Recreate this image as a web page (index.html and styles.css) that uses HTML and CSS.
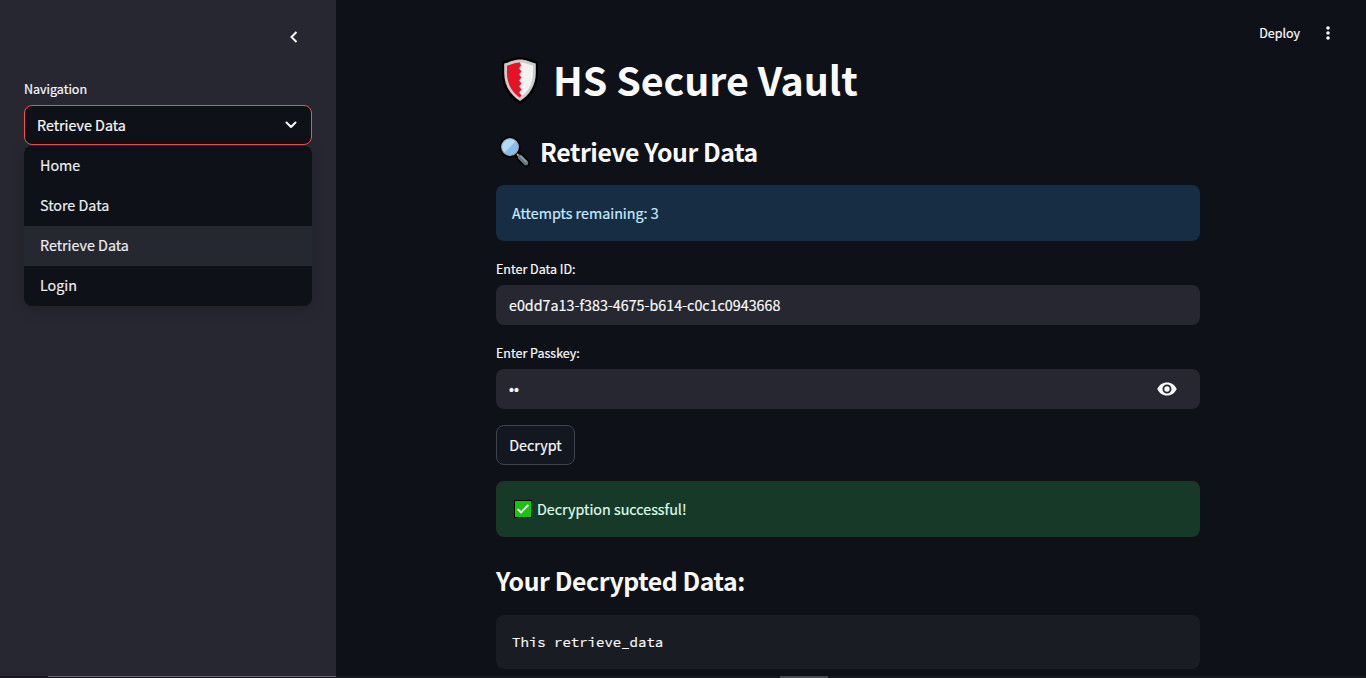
FILE: index.html
```html
<!DOCTYPE html>
<html lang="en">
<head>
<meta charset="utf-8">
<title>HS Secure Vault</title>
<link rel="stylesheet" href="styles.css">
</head>
<body>
<div class="app">
  <aside class="sidebar">
    <div class="sidebar-head">
      <svg class="collapse" width="10" height="14" viewBox="0 0 10 14"><path d="M7.5 2 2.500 7l5 5" fill="none" stroke="#fafafa" stroke-width="2"/></svg>
    </div>
    <div class="label"><span>Navigation</span></div>
    <div class="select">
      <span>Retrieve Data</span>
      <svg width="12" height="8" viewBox="0 0 12 8"><path d="M1.500 1.500 6 6l4.500-4.500" fill="none" stroke="#fafafa" stroke-width="2" stroke-linecap="round" stroke-linejoin="round"/></svg>
    </div>
    <ul class="menu">
      <li><span>Home</span></li>
      <li><span>Store Data</span></li>
      <li class="active"><span>Retrieve Data</span></li>
      <li><span>Login</span></li>
    </ul>
  </aside>
  <main class="main">
    <header class="toolbar">
      <span class="deploy">Deploy</span>
      <svg width="4" height="14" viewBox="0 0 4 14" fill="#fafafa"><circle cx="2" cy="2" r="1.800"/><circle cx="2" cy="7" r="1.800"/><circle cx="2" cy="12" r="1.800"/></svg>
    </header>
    <div class="content">
      <h1>
        <svg class="shield" width="38" height="48" viewBox="0 0 38 48">
          <path d="M19 0C25 0 30 3 37 4.500V16C37 31 29 42 19 47.500 9 42 1 31 1 16V4.500C8 3 13 0 19 0Z" fill="#000"/>
          <path d="M19 2.500C25 2.500 29 5 34.800 6.500V16C34.800 29 28 38.500 19 44 10 38.500 3.200 29 3.200 16V6.500C9 5 13 2.500 19 2.500Z" fill="#ccc"/>
          <path d="M19 5.500C24 5.500 28 7.500 32 8.700V16C32 27 26.500 36 19 40.500Z" fill="#f2f2f2"/>
          <path d="M19 5.500C14 5.500 10 7.500 6 8.700V16C6 27 11.500 36 19 40.500L20.500 38.500 18 35.500 20.500 32.500 18 29.500 20.500 26.500 18 23.500 20.500 20.500 18 17.500 20.500 14.500 18 11.500 20 8.500Z" fill="#e81224"/>
        </svg>
        <span>HS Secure Vault</span>
      </h1>
      <h2>
        <svg class="lens" width="32" height="32" viewBox="0 0 32 32">
          <path d="M17 17 27 27" stroke="#000" stroke-width="8" stroke-linecap="round"/>
          <circle cx="11" cy="11" r="10.500" fill="#000"/>
          <path d="m18 18 2.500 2.500" stroke="#9aa5a9" stroke-width="2"/>
          <path d="m21 21 6 6" stroke="#69797e" stroke-width="4.600" stroke-linecap="round"/>
          <path d="m21.500 20 6 6" stroke="#9aa5a9" stroke-width="1.200"/>
          <circle cx="11" cy="11" r="8.300" fill="#83beec" stroke="#a5b0b8" stroke-width="1.300"/>
          <path d="M5.500 16.500A7.700 7.700 0 0 1 16.500 5.500Z" fill="#b5daf5"/>
        </svg>
        <span>Retrieve Your Data</span>
      </h2>
      <div class="alert info"><span>Attempts remaining: 3</span></div>
      <div class="label field-label"><span>Enter Data ID:</span></div>
      <div class="input"><span>e0dd7a13-f383-4675-b614-c0c1c0943668</span></div>
      <div class="label field-label"><span>Enter Passkey:</span></div>
      <div class="input password">
        <span class="mask">••</span>
        <svg width="20" height="14" viewBox="0 0 20 14"><path fill-rule="evenodd" d="M10 .5C5.600.5 1.800 3.200.3 7c1.500 3.800 5.300 6.500 9.700 6.500s8.200-2.700 9.700-6.500C18.200 3.200 14.400.5 10 .5ZM10 11.500a4.500 4.500 0 1 1 0-9 4.500 4.500 0 0 1 0 9Zm0-1.800a2.700 2.700 0 1 0 0-5.400 2.700 2.700 0 0 0 0 5.400Z" fill="#fafafa"/></svg>
      </div>
      <div class="button"><span>Decrypt</span></div>
      <div class="alert success">
        <svg width="18" height="18" viewBox="0 0 18 18"><path d="M0 0h18v18H0z" fill="#000"/><path d="M1 1h16v16H1z" fill="#16c60c"/><path d="m3.700 9.200 3.300 3.300L14.300 5" fill="none" stroke="#fff" stroke-width="1.900"/></svg>
        <span>Decryption successful!</span>
      </div>
      <h2 class="result"><span>Your Decrypted Data:</span></h2>
      <div class="code">This retrieve_data</div>
    </div>
  </main>
  <div class="edge"><i class="edge-a"></i><i class="edge-b"></i></div>
</div>
</body>
</html>
```
FILE: styles.css
```css
* { box-sizing: border-box; }
body {
  margin: 0;
  background: #0e1117;
  color: #fafafa;
  font: 14.300px/24px "Source Sans Pro", "Noto Sans CJK SC", "Open Sans", sans-serif;
  -webkit-text-stroke: .2px currentColor;
}
span { white-space: nowrap; }
svg { display: block; flex: none; }
.app { position: relative; display: flex; width: 1366px; height: 678px; overflow: hidden; }
.sidebar { width: 336px; flex: none; background: #262730; padding: 0 24px; }
.sidebar-head { height: 79px; display: flex; justify-content: flex-end; padding: 30px 13px 0 0; }
.label { font-size: 12.500px; line-height: 20px; height: 26px; }
.select {
  height: 40px; border: 1px solid #ff4b4b; border-radius: 8px; background: #0e1117;
  display: flex; align-items: center; justify-content: space-between; padding: 0 14px 0 12px;
}
.menu {
  list-style: none; margin: 1px 0 0; padding: 0; height: 160px;
  border-radius: 8px; overflow: hidden; background: #0e1117; color: #ececed;
  box-shadow: 0 4px 16px rgba(0, 0, 0, .16);
}
.menu li { height: 40px; line-height: 38px; padding-left: 16px; }
.menu .active { background: #262831; }
.main { flex: 1; }
.toolbar { height: 56px; padding: 21px 36px 0 0; display: flex; justify-content: flex-end; gap: 26px; }
.toolbar svg { margin-top: 5px; }
.deploy { font-size: 12.500px; }
.content { width: 704px; margin-left: 160px; }
h1, h2 { margin: 0; display: flex; font-weight: 700; -webkit-text-stroke: 0; }
h1 { height: 80px; gap: 14px; padding-left: 5px; font-size: 39.400px; line-height: 46px; letter-spacing: -.05px; }
.shield { margin-top: 1px; }
h2 { height: 49px; gap: 9px; padding-left: 3px; font-size: 24.800px; line-height: 30px; letter-spacing: -.4px; }
.lens { margin-top: 0; }
.alert { height: 56px; border-radius: 8px; padding: 0 16px; display: flex; align-items: center; }
.info { background: #172d43; color: #c7ebff; }
.field-label { margin-top: 18px; }
.input { height: 40px; border-radius: 8px; background: #262730; padding: 0 13px; display: flex; align-items: center; }
.password { justify-content: space-between; padding-right: 23px; }
.mask { font-family: "Liberation Sans", sans-serif; font-size: 14px; padding-top: 2px; }
.button {
  width: 79px; height: 40px; margin: 16px 0; border: 1px solid #41444c; border-radius: 8px;
  background: #131720; display: flex; align-items: center; justify-content: center;
}
.success { background: #173928; color: #dffde9; gap: 5px; padding-left: 18px; }
.result { margin-top: 28px; padding: 0; height: 50px; }
.code {
  height: 54px; border-radius: 8px; background: #1a1c24; padding: 0 16px; line-height: 54px;
  font-family: "Source Code Pro", "Noto Sans Mono CJK SC", "Liberation Mono", monospace; font-size: 14px;
}
.edge { position: absolute; left: 0; right: 0; bottom: 0; height: 2px; background: #191919; display: flex; }
.edge-a { width: 288px; height: 1px; margin-left: 48px; background: #666; }
.edge-b { width: 48px; height: 2px; margin-left: 444px; background: #4a4a4a; }
```
